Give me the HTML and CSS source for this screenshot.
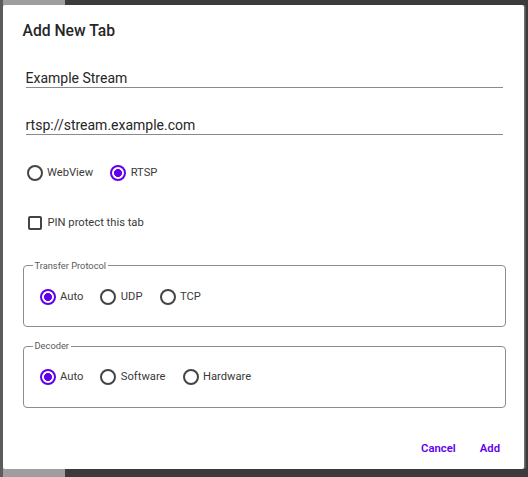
FILE: index.html
```html
<!DOCTYPE html>
<html>
<head>
<meta charset="utf-8">
<link rel="stylesheet" href="styles.css">
</head>
<body>
<div class="dialog">
  <h1 class="title">Add New Tab</h1>
  <div class="field">Example Stream</div>
  <div class="field">rtsp://stream.example.com</div>
  <div class="row top-row">
    <label class="opt"><span class="radio"></span>WebView</label>
    <label class="opt"><span class="radio on"></span>RTSP</label>
  </div>
  <label class="row check-row"><span class="checkbox"></span>PIN protect this tab</label>
  <fieldset class="group first">
    <legend>Transfer Protocol</legend>
    <div class="row inner">
      <label class="opt"><span class="radio on"></span>Auto</label>
      <label class="opt"><span class="radio"></span>UDP</label>
      <label class="opt"><span class="radio"></span>TCP</label>
    </div>
  </fieldset>
  <fieldset class="group second">
    <legend>Decoder</legend>
    <div class="row inner">
      <label class="opt"><span class="radio on"></span>Auto</label>
      <label class="opt"><span class="radio"></span>Software</label>
      <label class="opt"><span class="radio"></span>Hardware</label>
    </div>
  </fieldset>
  <div class="actions">
    <button class="btn">Cancel</button>
    <button class="btn">Add</button>
  </div>
</div>
</body>
</html>
```
FILE: styles.css
```css
html, body {
  margin: 0;
  padding: 0;
  height: 100%;
  overflow: hidden;
}
body {
  background: linear-gradient(to right, #5c5c5c 0 3px, #9e9e9e 3px 65px, #3b3b3b 65px);
  font-family: Roboto, "Liberation Sans", sans-serif;
  color: #222;
}
.dialog {
  box-sizing: border-box;
  margin: 5px 0 0 3px;
  width: 521px;
  height: 464px;
  background: #fff;
  border-radius: 2px;
  padding: 16px 18.5px 0 19.5px;
  box-shadow: 1px 0 0 #707070, 2px 0 0 #555;
}
.title {
  margin: 0;
  font-size: 15.7px;
  font-weight: 500;
  line-height: 20px;
  color: #262626;
}
.field {
  margin: 28px 3px 0 3px;
  font-size: 14px;
  line-height: 18px;
  color: #262626;
  border-bottom: 1px solid #8a8a8a;
}
.row {
  display: flex;
  align-items: center;
  height: 20px;
  font-size: 11.2px;
  line-height: 20px;
  color: #3a3a3a;
}
.top-row {
  margin-top: 28px;
  padding-left: 4px;
  gap: 17px;
}
.check-row {
  margin-top: 29.5px;
  padding-left: 5px;
  gap: 6px;
}
.opt {
  display: flex;
  align-items: center;
  gap: 4.5px;
}
.radio {
  box-sizing: border-box;
  width: 16px;
  height: 16px;
  border: 2px solid #444;
  border-radius: 50%;
  flex: none;
}
.radio.on {
  border-color: #6200ee;
  background: radial-gradient(circle at center, #6200ee 0 3.7px, transparent 4.3px);
}
.checkbox {
  box-sizing: border-box;
  width: 14px;
  height: 14px;
  border: 2px solid #444;
  border-radius: 2px;
  flex: none;
}
.group {
  margin: 0;
  min-width: 0;
  border: 1px solid #8c8c8c;
  border-radius: 4px;
  padding: 15px 0 19.5px 9px;
}
.group.first {
  margin-top: 27px;
}
.group.second {
  margin-top: 13px;
}
.group legend {
  padding: 0 2px;
  font-size: 9.3px;
  line-height: 12px;
  color: #5a5a5a;
}
.inner {
  padding-left: 7px;
  gap: 17px;
}
.actions {
  margin-top: 31px;
  margin-right: 5.5px;
  display: flex;
  justify-content: flex-end;
  gap: 24px;
}
.btn {
  border: 0;
  padding: 0;
  background: none;
  font-family: Roboto, "Liberation Sans", sans-serif;
  font-size: 11.3px;
  font-weight: 600;
  line-height: 20px;
  color: #6200ee;
}
```
